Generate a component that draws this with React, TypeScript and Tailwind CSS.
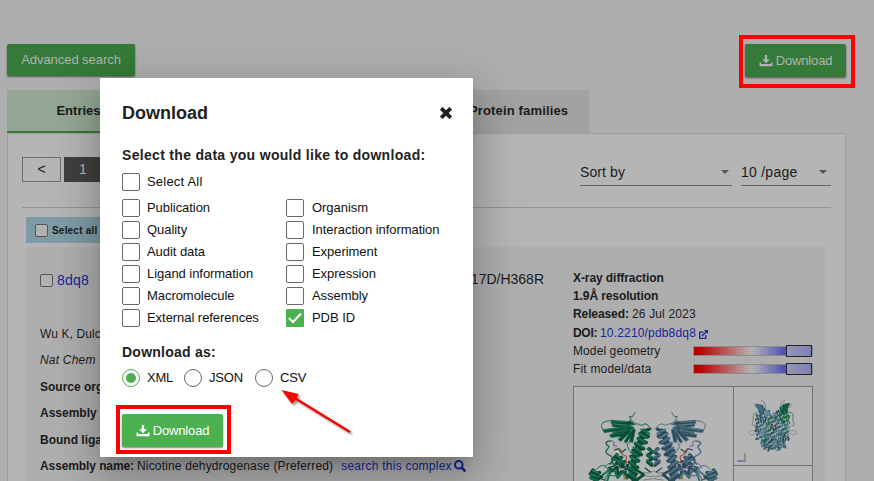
import React from "react";

const DownloadIcon = () => (
  <svg width="14" height="12" viewBox="0 0 14 12" className="mr-[3px] shrink-0" fill="currentColor">
    <path d="M5.900 0h2.200v4.300h2.700L7 8.200 3.200 4.300h2.700z" />
    <path d="M.5 7.500h1.600v1.500h9.800V7.500h1.600v3.800H.5z" />
  </svg>
);

const Caret = () => (
  <svg width="8" height="4" viewBox="0 0 8 4" fill="#555">
    <path d="M0 0h8L4 4z" />
  </svg>
);

const Box = ({ checked }: { checked?: boolean }) =>
  checked ? (
    <span className="flex h-[18px] w-[18px] shrink-0 items-center justify-center rounded-[1px] bg-[#4caf50]">
      <svg width="14" height="12" viewBox="0 0 14 12" fill="none" stroke="#fff" strokeWidth="2">
        <path d="M1 6l4 4 8-8.500" />
      </svg>
    </span>
  ) : (
    <span className="h-[18px] w-[18px] shrink-0 rounded-[2px] border border-[#686868] bg-white" />
  );

const Option = ({ label, checked, wide }: { label: string; checked?: boolean; wide?: boolean }) => (
  <label className="flex h-[22px] items-center text-[13px] leading-[18px] text-[#111]">
    <Box checked={checked} />
    <span className={wide ? "ml-[8px] whitespace-nowrap" : "ml-[7px] whitespace-nowrap"}>{label}</span>
  </label>
);

const Radio = ({ label, checked }: { label: string; checked?: boolean }) => (
  <label className="flex items-center text-[13px] leading-[18px] tracking-[-0.2px] text-[#111]">
    <span
      className={
        checked
          ? "flex h-[18px] w-[18px] items-center justify-center rounded-full border border-[#4caf50]"
          : "h-[18px] w-[18px] rounded-full border border-[#686868]"
      }
    >
      {checked && <span className="h-[10px] w-[10px] rounded-full bg-[#4caf50]" />}
    </span>
    <span className="ml-[7px]">{label}</span>
  </label>
);

const Slider = () => (
  <div className="flex h-[12px] w-[120px] items-stretch">
    <div className="my-px w-[93px] border border-r-0 border-[#8c8c8c] bg-[linear-gradient(to_right,#b80000_0%,#b80000_6%,#b4b4b4_63%,#5151b5_98%)]" />
    <div className="w-[26px] border border-[#252525] bg-[linear-gradient(to_right,#9696b8,#7f7fb5)]" />
    <div className="my-px w-px bg-[#8c8c8c]" />
  </div>
);

type Tone = { main: string; dark: string; light: string };
const green: Tone = { main: "#14694a", dark: "#0b4732", light: "#2b8062" };
const blue: Tone = { main: "#456a7d", dark: "#2c4959", light: "#688b9d" };

const Ribbon = ({ t }: { t: Tone }) => (
  <g fill="none" strokeLinecap="round" strokeLinejoin="round">
    {/* connecting loops */}
    <g stroke={t.main} strokeWidth="3">
      <path d="M210 97l-9 14-8-2 6 12 12 10" />
      <path d="M140 122c-24 0-34 10-30 18s3 14 9 16 16-4 28-3" />
      <path d="M212 132c8-4 14 8 22 2s16 0 26 14" />
      <path d="M137 183c-14 0-18 8-8 14s-9 10-6 20 14 6 18 14-2 16-6 22" strokeWidth="4" />
      <path d="M196 160c-6 12 8 18-4 28s2 22 6 30" />
      <path d="M232 280c10-8 14 3 22-2s6-3 10-3M230 290c12-8 20 4 34-2M236 300l28-4" stroke="#71807b" />
      <path d="M92 270c14-16 28-20 36-2s-10 18-8 34M120 262c10-18 22-14 30-2" />
      <path d="M150 262c14-4 22 2 28-4s12 8 22 6M126 288c12-6 20 4 34-2" />
    </g>
    {/* beta sheets */}
    <g fill={t.dark} stroke={t.main} strokeWidth="2.5">
      <path d="M140 121l52 4 1-4 17 13-18 1-53-5z" />
      <path d="M142 133l46 4 0-4 20 11-20 2-45-7z" />
      <path d="M116 149l68-10 0-4 16 7-14 9-68 6z" />
      <path d="M143 158l43-13 0-4 18 3-14 12-46 10z" />
      <path d="M135 164l32-3 24-13 6 5-27 16-32 3z" />
      <path d="M160 178l28-28 8 5-28 29z" />
      <path d="M178 184l20-32 8 4-22 33z" />
      <path d="M194 184l8-38 9 3-8 38z" />
    </g>
    {/* alpha helices */}
    <g stroke={t.dark} strokeWidth="10">
      <path d="M238 154l-12 28-12 30-8 28-2 30 4 36" strokeWidth="16" />
      <path d="M252 148l-26 12 24 9-30 6 24 13-32 4 24 14-32 5 25 13-31 5 23 14-28 4 25 15-29 5 25 15-27 5 28 15" />
      <path d="M156 224l-12 14 26-6-16 18 26-5-20 18 28-6" />
      <path d="M84 270l-8 12 28-4-26 16 32-4-26 17" />
      <path d="M252 206l10 10-14 10 14 9-14 11 12 10" />
      <path d="M136 276l22-16 0 22 24-14-2 24 20-10M214 270l22 14-18 14" strokeWidth="8" />
    </g>
    <g stroke={t.main} strokeWidth="6">
      <path d="M229 149l24 12M222 162l26 12M217 175l25 14M210 188l24 14M205 203l22 13M200 217l21 14M197 232l20 12M193 246l22 14M191 263l22 14M191 280l24 16" />
      <path d="M154 225l14 9M146 236l21 14M163 240l18 11" />
      <path d="M82 271l18 8M76 282l25 9M77 294l20 7" />
      <path d="M112 286l28-22-14 40M148 270l10 24 16-18 12 20" />
      <path d="M248 207l14 7M246 224l15 8M246 241l15 9" />
    </g>
    <g stroke={t.light} strokeWidth="2">
      <path d="M232 148l18 8M225 160l18 9M219 172l17 10M212 186l16 9M207 200l15 9M202 214l14 9M199 229l13 8M195 243l14 9M193 260l15 9M193 277l15 9" />
      <path d="M143 124l40 3M122 151l60-9M146 160l38-11M114 283l20-14M156 226l9 6M150 238l13 8M84 273l14 5M80 285l15 5" />
    </g>
    <g stroke={t.dark} strokeWidth="3.5">
      <path d="M140 245l12 12-22 6 14 12M104 294l14 6M148 210l14-4 6 12 14-10M240 264l16 12" />
    </g>
    {/* bound ligand */}
    <g strokeWidth="3.5">
      <path stroke="#7671a0" d="M140 182l8 6-3 8 11 2M172 268l8 4 9-2M158 257l8 5" />
      <path stroke="#a34d42" d="M162 207l6 4 2 8 7 8M181 226l4 7-3 8 4 8" />
      <path stroke="#b59ca2" d="M147 200l8 4M168 222l8 8M183 250l-3 8M162 266l12 3" />
      <path stroke="#978e37" d="M174 284l6 7-3 8" />
    </g>
  </g>
);

const Structure = () => (
  <svg width="159" height="94" viewBox="27 21 477 282" className="block">
    <Ribbon t={green} />
    <g transform="translate(530 0) scale(-1 1)">
      <Ribbon t={blue} />
    </g>
  </svg>
);

/* Side view of the assembly, with a small axis marker */
const SideView = () => {
  const strands: React.ReactNode[] = [];
  const tones = ["#416d80", "#587f91", "#294b5a", "#176446", "#5f8796", "#35596a", "#527a8c", "#1f4450"];
  for (let i = 0; i < 460; i++) {
    // low-discrepancy placement keeps the strands evenly spread
    const u = (i * 0.7548777) % 1;
    const v = (i * 0.5698403) % 1;
    const y = 78 + v * 126;
    const half = y < 100 ? 44 : y < 178 ? 50 : 36;
    const x = 143 + (u * 2 - 1) * half;
    if (y < 103 && Math.abs(x - 143) < 103 - y) continue;
    const dx = ((i * 37) % 15) - 7;
    const dy = ((i * 23) % 13) - 6;
    const color = y < 125 && x > 160 ? (i % 3 ? "#146747" : "#0e5038") : tones[(i * 13 + (i >> 3)) % 8];
    strands.push(
      <path
        key={i}
        d={`M${x.toFixed(1)} ${y.toFixed(1)}q${dx} ${dy} ${dy / 2} ${dx + 3}`}
        stroke={color}
        strokeWidth={2.5 + (i % 3)}
      />
    );
  }
  return (
    <svg width="78" height="77" viewBox="27 21 234 231" className="block" fill="none" strokeLinecap="round">
      <g strokeWidth="2.5" stroke="#557b89">
        <path d="M108 60l10 8 4 14M180 60l-10 8-4 14M95 84l-8-12M192 84l8-12" />
        <path d="M96 98c-16-4-10 18-12 26s-8 12 6 13" />
        <path d="M190 98c20-6 12 16 14 24s8 14-4 16" stroke="#32705b" />
        <path d="M92 154c-10-6-20-3-20 4s10 9 20 3M194 154c10-6 21-3 21 4s-11 9-21 3" stroke="#7d8b83" />
        <path d="M120 202c-2 8 6 10 14 6M164 202c4 8-6 12-14 8" />
      </g>
      {strands}
      <path d="M170 102l4-28 20-4-10 22zM166 84l8 14" fill="#105b3e" stroke="#0d4936" strokeWidth="2" />
      <path d="M116 102l-4-26-20-4 10 20z" fill="#426d80" stroke="#294b5a" strokeWidth="2" />
      <path d="M130 136l5-3M148 138l5 4M138 146l4-3M182 204h2" stroke="#8d514d" strokeWidth="3" />
      <path d="M60 220v22" stroke="#4b774b" strokeWidth="3" strokeLinecap="butt" />
      <path d="M37 243h24" stroke="#5151a5" strokeWidth="3.5" strokeLinecap="butt" />
    </svg>
  );
};

const leftOptions = ["Publication", "Quality", "Audit data", "Ligand information", "Macromolecule", "External references"];
const rightOptions = ["Organism", "Interaction information", "Experiment", "Expression", "Assembly", "PDB ID"];

const Dialog = () => (
  <div className="absolute top-[78px] left-[100px] h-[379px] w-[373px] rounded-[1px] bg-white pr-[20px] pl-[22px] text-[#222] shadow-[0_11px_15px_-7px_rgba(0,0,0,0.2),0_24px_38px_3px_rgba(0,0,0,0.14),0_9px_46px_8px_rgba(0,0,0,0.12)]">
    <div className="flex h-[64px] items-center justify-between pt-[6px]">
      <h2 className="text-[18px] leading-[24px] font-bold">Download</h2>
      <svg width="12" height="12" viewBox="0 0 12 12" stroke="#222" strokeWidth="3.8" className="mr-[1px]">
        <path d="M1.300 1.300l9.400 9.400M10.700 1.300l-9.400 9.400" />
      </svg>
    </div>
    <h3 className="mt-[3px] text-[14px] leading-[20px] font-bold tracking-[0.31px] whitespace-nowrap">
      Select the data you would like to download:
    </h3>
    <div className="mt-[6px] tracking-[0.2px]">
      <Option label="Select All" />
    </div>
    <div className="mt-[4px] flex tracking-[-0.05px]">
      <div className="w-[164px]">
        {leftOptions.map((o) => (
          <Option key={o} label={o} />
        ))}
      </div>
      <div>
        {rightOptions.map((o) => (
          <Option key={o} label={o} checked={o === "PDB ID"} wide />
        ))}
      </div>
    </div>
    <h3 className="mt-[13px] text-[14px] leading-[20px] font-bold tracking-[0.25px]">Download as:</h3>
    <div className="mt-[7px] flex">
      <div className="w-[62px]"><Radio label="XML" checked /></div>
      <div className="w-[71px]"><Radio label="JSON" /></div>
      <Radio label="CSV" />
    </div>
    <button className="mt-[27px] flex h-[33px] w-[101px] items-center justify-center rounded-[2px] bg-[#4caf50] text-[13px] tracking-[-0.15px] text-white shadow-[0_1px_2px_rgba(0,0,0,0.5)]">
      <DownloadIcon />
      Download
    </button>
  </div>
);

export default function App() {
  return (
    <div className="relative h-[481px] w-[874px] overflow-hidden bg-[#aeaeae] font-['Liberation_Sans',Arial,sans-serif] text-[13px] text-[#1b1b1b]">
      <div className="flex h-[90px] items-start justify-between pt-[44px] pr-[28px] pl-[7px]">
        <button className="h-[32px] w-[128px] rounded-[2px] bg-[#357a38] text-[13px] tracking-[-0.05px] text-[#b2b2b2] shadow-[0_1px_2px_rgba(0,0,0,0.5)]">
          Advanced search
        </button>
        <button className="flex h-[33px] w-[101px] items-center justify-center rounded-[2px] bg-[#357a38] text-[13px] tracking-[-0.15px] text-[#b2b2b2] shadow-[0_1px_2px_rgba(0,0,0,0.5)]">
          <DownloadIcon />
          Download
        </button>
      </div>

      <div className="flex h-[43px] pl-[7px] text-[13px] leading-[41px] font-bold">
        <div className="w-[143px] border-b-2 border-[#357a38] bg-[#93a794] text-center">Entries</div>
        <div className="w-[299px] bg-[#a2a2a2]" />
        <div className="w-[140px] bg-[#a2a2a2] pl-[20px] tracking-[0.150px] whitespace-nowrap">Protein families</div>
      </div>

      <div className="ml-[7px] h-[400px] w-[839px] border border-[#9e9e9e] bg-[#b5b5b5]">
        <div className="mx-[14px] flex h-[74px] items-start justify-between border-b border-[#929292] pt-[23px]">
          <div className="flex gap-[3px] text-[14px] leading-[23px]">
            <div className="h-[25px] w-[39px] border border-[#6c6c6c] text-center">&lt;</div>
            <div className="h-[25px] w-[38px] bg-[#3f3f3f] pt-px text-center text-[#b5b5b5]">1</div>
          </div>
          <div className="flex gap-[9px] pt-[2px] text-[14px]">
            <div className="flex h-[27px] w-[152px] items-center justify-between border-b border-[#666] pr-[3px]">
              <span className="tracking-[0.1px]">Sort by</span> <Caret />
            </div>
            <div className="flex h-[27px] w-[90px] items-center justify-between border-b border-[#666] pr-[4px]">
              <span className="tracking-[0.25px]">10 /page</span> <Caret />
            </div>
          </div>
        </div>

        <div className="mt-[9px] ml-[18px] flex h-[26px] w-[120px] items-center bg-[#7d9ba5] pl-[9px] text-[10px] font-bold">
          <span className="mr-[4px] h-[13px] w-[13px] rounded-[2px] border border-[#555] bg-[#b2b2b2]" />
          <span className="tracking-[0.2px]">Select all</span>
        </div>

        <div className="mt-[4px] ml-[18px] flex h-[300px] w-[800px] bg-[#aeaeae] pl-[14px]">
          <div className="w-[533px] shrink-0">
            <div className="flex h-[66px] items-center justify-between pr-[29px] text-[14px]">
              <span className="flex items-center">
                <span className="mt-px mr-[4px] h-[13px] w-[13px] rounded-[2px] border border-[#555] bg-[#b2b2b2]" />
                <span className="tracking-[0.2px] text-[#13259b]">8dq8</span>
              </span>
              <span className="-mt-[2px]">17D/H368R</span>
            </div>
            <div className="pt-[8px] text-[12px] leading-[26.4px] whitespace-nowrap">
              <div className="tracking-[0.1px]">Wu K, Dulc</div>
              <div className="tracking-[0.2px] italic">Nat Chem</div>
              <div className="font-bold">Source org</div>
              <div className="font-bold">Assembly c</div>
              <div className="font-bold">Bound liga</div>
              <div className="flex items-center">
                <b className="w-[97px] tracking-[-0.1px]">Assembly name:</b>
                <span className="tracking-[0.16px]">Nicotine dehydrogenase (Preferred)</span>
                <span className="ml-[8px] flex items-center text-[#13259b]">
                  <span className="tracking-[0.24px]">search this complex</span>
                  <svg width="12" height="12" viewBox="0 0 12 12" fill="none" stroke="#13259b" strokeWidth="2" className="ml-[2px]">
                    <circle cx="4.800" cy="4.800" r="3.800" />
                    <path d="M7.500 7.500l4 4" strokeWidth="2.500" />
                  </svg>
                </span>
              </div>
            </div>
          </div>

          <div className="w-[240px] pt-[22px] text-[12px] leading-[18px]">
            <div className="font-bold tracking-[-0.08px]">X-ray diffraction</div>
            <div className="font-bold tracking-[-0.1px]">1.9Å resolution</div>
            <div className="flex">
              <b className="w-[59px] tracking-[-0.1px]">Released:</b>
              <span className="tracking-[0.15px]">26 Jul 2023</span>
            </div>
            <div className="flex h-[19px] items-center">
              <b className="w-[27px] tracking-[-0.3px]">DOI:</b>
              <span className="tracking-[0.17px] text-[#13259b]">10.2210/pdb8dq8</span>
              <svg width="9" height="9" viewBox="0 0 9 9" fill="none" stroke="#13259b" strokeWidth="1.300" className="mt-[3px] ml-[3px]">
                <path d="M4.500 2.200H.7v6.100h6.100V5M3 6l4-4" />
                <path d="M5 0h4v4z" fill="#13259b" stroke="none" />
              </svg>
            </div>
            <div className="flex h-[18px] items-center justify-between tracking-[0.1px]">Model geometry <Slider /></div>
            <div className="flex h-[18px] items-center justify-between tracking-[0.18px]">Fit model/data <Slider /></div>
            <div className="mt-[8px] flex h-[120px] w-[240px] border border-[#737373] bg-[#b5b5b5]">
              <div className="w-[160px] border-r border-[#737373]"><Structure /></div>
              <div className="w-[78px]">
                <div className="h-[79px] border-b border-[#737373]"><SideView /></div>
              </div>
            </div>
          </div>
        </div>
      </div>

      <Dialog />

      {/* Tutorial annotations */}
      <div className="absolute top-[35px] left-[739px] h-[53px] w-[116px] border-4 border-[#ff0000]" />
      <div className="absolute top-[405px] left-[116px] h-[49px] w-[115px] border-4 border-[#ff0000]" />
      <svg width="80" height="55" viewBox="0 0 80 55" className="absolute top-[385px] left-[277px] [filter:drop-shadow(2px_2px_1px_rgba(0,0,0,0.4))]">
        <path d="M18 13.300L73 47" stroke="#f00" strokeWidth="2.500" />
        <path d="M4.500 5L21.500 9L19.500 14L15 19z" fill="#f00" />
      </svg>
    </div>
  );
}
